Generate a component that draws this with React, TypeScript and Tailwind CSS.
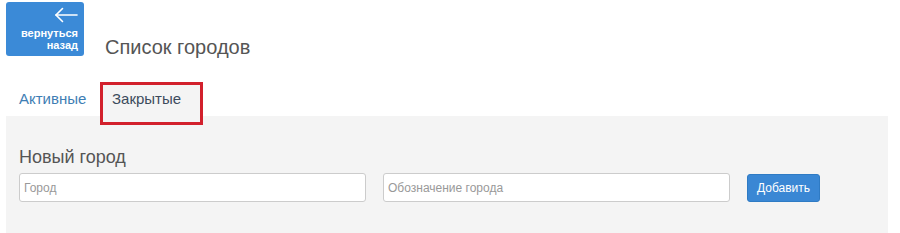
import React from 'react';

function BackButton() {
    return (
        <button className="w-[78px] h-[54px] rounded-[3px] bg-[#3b8ad7] flex flex-col items-end justify-start pr-[6px] pt-[5px] text-white">
            <svg width="24" height="16" viewBox="0 0 24 16" fill="none" stroke="white" strokeWidth="1.6" strokeLinecap="round">
                <path d="M23 8H2" />
                <path d="M8.5 1.5L2 8l6.5 6.5" />
            </svg>
            <span className="mt-[4px] text-[11px] leading-[12px] font-semibold text-right">
                вернуться<br />назад
            </span>
        </button>
    );
}

export default function App() {
    return (
        <div className="w-[900px] h-[233px] bg-white overflow-hidden font-['Liberation_Sans',Arial,sans-serif]">
            {/* header */}
            <div className="flex items-end pt-[2px] pl-[6px]">
                <BackButton />
                <h1 className="ml-[21px] mb-[-3px] text-[20px] leading-[24px] text-[#555]">Список городов</h1>
            </div>

            {/* tabs */}
            <div className="mt-[26px] flex pl-[6px]">
                <div className="h-[34px] w-[94px] pl-[13px] flex items-center text-[15px] text-[#3e7eb4]">Активные</div>
                <div className="relative h-[34px] w-[100px] pl-[12px] flex items-center bg-[#f4f4f4] text-[15px] text-[#3c4b5c]">
                    Закрытые
                    <div className="absolute left-[0px] top-[0px] w-[103px] h-[43px] border-[3px] border-[#d2202c]" />
                </div>
            </div>

            {/* panel */}
            <div className="ml-[6px] w-[882px] h-[140px] bg-[#f4f4f4] px-[13px] pt-[30px]">
                <h2 className="text-[18px] leading-[22px] text-[#555]">Новый город</h2>
                <div className="mt-[5px] flex items-center gap-[17px]">
                    <input
                        placeholder="Город"
                        className="w-[347px] h-[29px] rounded-[3px] border border-[#ccc] bg-white px-[4px] text-[12px] placeholder:text-[#999] outline-none"
                    />
                    <input
                        placeholder="Обозначение города"
                        className="w-[347px] h-[29px] rounded-[3px] border border-[#ccc] bg-white px-[4px] text-[12px] placeholder:text-[#999] outline-none"
                    />
                    <button className="w-[73px] h-[28px] rounded-[3px] bg-[#3a87d4] border border-[#2f7bc4] text-white text-[12px]">
                        Добавить
                    </button>
                </div>
            </div>
        </div>
    );
}
